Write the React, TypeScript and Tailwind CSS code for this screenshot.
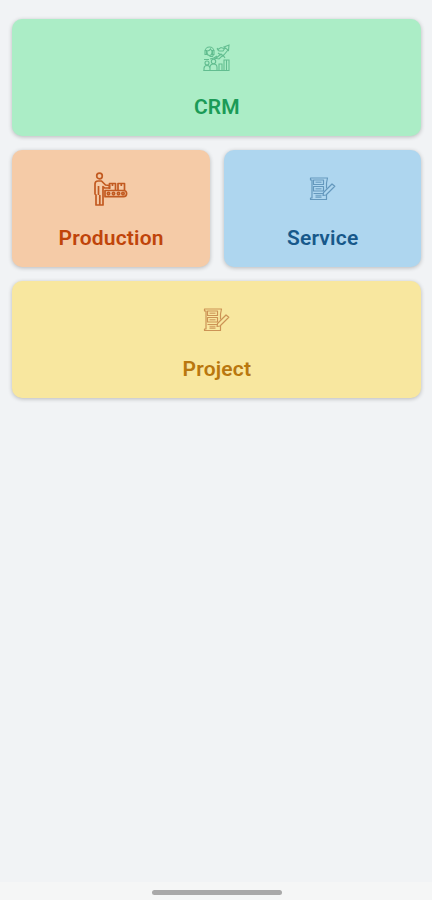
import type { ReactNode } from 'react';

// ─── Dashboard ───────────────────────────────────────────────────────────────

export default function App() {
  return (
    <div className="flex h-screen flex-col bg-[#f1f3f5] font-['Roboto',sans-serif]">
      <main className="grid flex-1 auto-rows-[117px] grid-cols-2 content-start gap-[14px] pt-[19px] pr-[10.6px] pl-[12.4px]">
        <ModuleCard label="CRM" className="col-span-2 bg-[#abedc6] text-[#1b9b57]">
          <CrmIcon />
        </ModuleCard>
        <ModuleCard label="Production" className="bg-[#f5cba7] text-[#c0440a]">
          <ProductionIcon />
        </ModuleCard>
        <ModuleCard label="Service" className="bg-[#aed6ef] text-[#17588a]">
          <ChecklistIcon className="text-[#6498bd]" />
        </ModuleCard>
        <ModuleCard label="Project" className="col-span-2 bg-[#f8e79f] text-[#b9770e]">
          <ChecklistIcon className="text-[#cc9355]" />
        </ModuleCard>
      </main>

      {/* Gesture bar */}
      <div className="flex h-[18px] justify-center bg-[#f5f6f6] pt-2 pl-px">
        <div className="h-[5px] w-[130px] rounded-full bg-[#a9a9a9]" />
      </div>
    </div>
  );
}

// ─── Sub-components ───────────────────────────────────────────────────────────

function ModuleCard({ label, className, children }: { label: string; className: string; children: ReactNode }) {
  return (
    <button
      className={`flex flex-col items-center rounded-[10px] pt-[19px] shadow-[0_1px_4px_rgba(0,0,0,0.24)] ${className}`}
    >
      {children}
      <span className="mt-4 text-[21px] leading-[26px] font-semibold tracking-[0.2px]">{label}</span>
    </button>
  );
}

function CrmIcon() {
  return (
    <svg width="40" height="40" viewBox="0 0 40 40" fill="none" stroke="currentColor" strokeWidth="1.1" className="text-[#62bd90]">
      {/* Headset agent */}
      <path d="M8 13.5a4.5 4.5 0 0 1 9 0M8 12.5v4h1.5v-4zM15.5 12.5v4H17v-4z" />
      <path d="M10 13c2 0 3-1 3.5-2 .5 1 1 1.5 1.5 2v1.5a2.5 3 0 0 1-5 0zM12.5 18.5h3l1-2" />
      {/* Group */}
      <circle cx="10" cy="25" r="2" />
      <circle cx="16.5" cy="23.5" r="2.2" />
      <path d="M7 33v-2.5a3 3 0 0 1 6 0V33M13 33v-3.5a3.5 3.5 0 0 1 7 0V33M7 21.5h5M17 20l3-2" />
      {/* Growth arrow and bars */}
      <path d="m18 21 6-5 2 2 5-6M27 9l5-2-.5 5.5zM20 10l2 3h4l2-3M20 12l4-2.5 3 1M21 15l3 2M13 21l4-1 5 1 4-4 2 3" />
      <path d="M22 33v-7h3v7M27 33V22h5v11M29.5 22v11M6.5 32.5h26" />
    </svg>
  );
}

function ProductionIcon() {
  return (
    <svg width="40" height="40" viewBox="0 -1 40 40" fill="none" stroke="currentColor" strokeWidth="1.7" strokeLinejoin="round" className="text-[#c25a20]">
      {/* Worker */}
      <circle cx="8.5" cy="6" r="2.8" />
      <path d="M5 35V25l-1-1V14a3 3 0 0 1 3-3h3.5l4 4 4 .5V18l-5-.2-1.5-1.2V35zM8.8 25v10M7.5 16v9" />
      {/* Boxes */}
      <path d="M18.5 19v-5.500h6v7M21.500 13.500V16M27 20v-6.500h6.500V20M30.300 13.500V16" />
      {/* Conveyor */}
      <path d="M14 20.500h18.500a3.100 3.100 0 0 1 0 6.200H14z" />
      <circle cx="17.500" cy="23.600" r="1.200" />
      <circle cx="22.500" cy="23.600" r="1.200" />
      <circle cx="27.500" cy="23.600" r="1.200" />
      <circle cx="32" cy="23.600" r="1.200" />
    </svg>
  );
}

function ChecklistIcon({ className }: { className: string }) {
  return (
    <svg width="40" height="40" viewBox="0 0 40 40" fill="none" stroke="currentColor" strokeWidth="1.2" strokeLinejoin="round" className={className}>
      <path d="M23.500 19.500V14l1-5h-17v2H9v18H7.500v1.500h16V26" />
      {/* Rows */}
      <path d="M10.500 11h10v4.500h-10zM10.500 17.500h10V22h-10zM10.500 24.500h10" />
      <path d="M12.500 13.200h6M12.500 19.800h6M12.500 26.500h6M12.500 28.300h6" strokeWidth="1.500" opacity="0.700" />
      {/* Pencil */}
      <path d="m20.500 23.500 8.500-8.500 2.800 2.300-8.800 8.700-3 .5z" />
    </svg>
  );
}
